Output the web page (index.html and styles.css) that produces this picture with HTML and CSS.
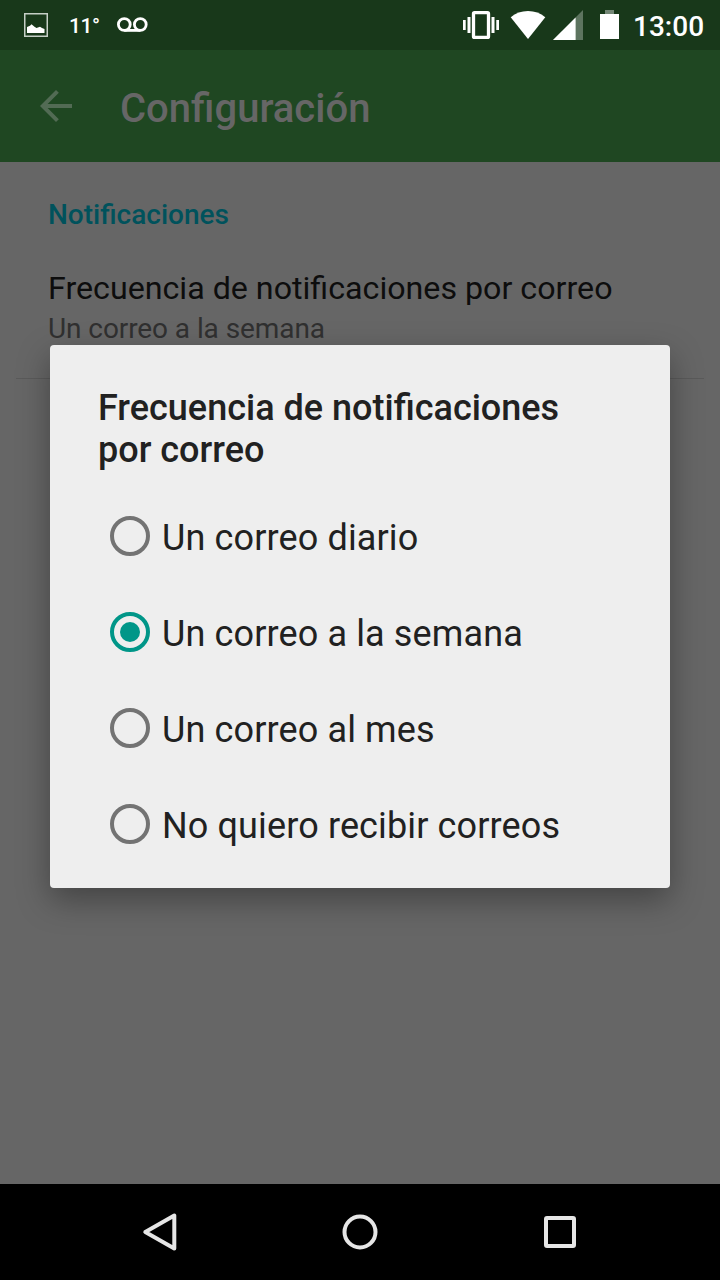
FILE: index.html
```html
<!DOCTYPE html>
<html lang="es">
<head>
<meta charset="utf-8">
<title>Configuración</title>
<link rel="stylesheet" href="styles.css">
</head>
<body>
<div class="screen">
  <div class="status-bar">
    <svg class="status-icons" width="24" height="24" viewBox="0 0 24 24" fill="#fff">
      <rect x="0.75" y="0.75" width="22.5" height="22.5" fill="none" stroke="#c5cfc6" stroke-width="1.5"/>
      <path d="M3 20v-6l3-1.200 1.500-1.500 3 2.500 2 1.200 3.500-1.200 2 1.200 2.500 1v4z"/>
    </svg>
    <span class="temperature">11°</span>
    <svg class="voicemail" width="31" height="16" viewBox="0 0 31 16" fill="none" stroke="#fff" stroke-width="2.800">
      <circle cx="7.300" cy="7.500" r="5.900"/>
      <circle cx="23.300" cy="7.500" r="5.900"/>
      <path d="M7.300 13.400h16"/>
    </svg>
    <svg class="system-icons" width="156" height="30" viewBox="463 10 156 30" fill="#fff">
      <path d="M463 20h2.700v10H463zM467.500 17h3v16h-3zM491.500 17h3v16h-3zM496.300 20h2.700v10h-2.700z"/>
      <rect x="473.500" y="12.700" width="15" height="24.700" rx="1" fill="none" stroke="#fff" stroke-width="3.300"/>
      <path d="M528 39L510.700 17.300Q518 11 528 11T545.300 17.300z"/>
      <path d="M583 10v30h-30z" fill="#5d745f"/>
      <path d="M575.600 17.400V40H553z"/>
      <path d="M605 10h9v4h-9z" fill="#748776"/>
      <path d="M600 14h19v25h-19z"/>
    </svg>
    <span class="clock">13:00</span>
  </div>
  <header class="toolbar">
    <svg class="back" width="48" height="48" viewBox="0 0 24 24" fill="#526b54"><path d="M20 11H7.830l5.590-5.590L12 4l-8 8 8 8 1.410-1.410L7.830 13H20z"/></svg>
    <h1 class="toolbar-title">Configuración</h1>
  </header>
  <main class="content">
    <h2 class="section">Notificaciones</h2>
    <div class="preference">
      <div class="preference-title">Frecuencia de notificaciones por correo</div>
      <div class="preference-value">Un correo a la semana</div>
    </div>
    <div class="dialog">
      <h2 class="dialog-title">Frecuencia de notificaciones por correo</h2>
      <div class="option"><span class="radio"></span><span class="label">Un correo diario</span></div>
      <div class="option"><span class="radio checked"></span><span class="label">Un correo a la semana</span></div>
      <div class="option"><span class="radio"></span><span class="label">Un correo al mes</span></div>
      <div class="option"><span class="radio"></span><span class="label">No quiero recibir correos</span></div>
    </div>
  </main>
  <nav class="nav-bar">
    <svg width="40" height="40" viewBox="0 0 40 40"><path d="M5.300 20L34.300 3.500v33z"/></svg>
    <svg width="40" height="40" viewBox="0 0 40 40"><circle cx="20" cy="20" r="15.500"/></svg>
    <svg width="40" height="40" viewBox="0 0 40 40"><rect x="6" y="6" width="28" height="28" rx="1"/></svg>
  </nav>
</div>
</body>
</html>
```
FILE: styles.css
```css
* { box-sizing: border-box; }
body { margin: 0; font-family: Roboto, sans-serif; }
h1, h2 { margin: 0; font-weight: 500; }
svg { display: block; flex: none; }

.screen {
  width: 720px;
  height: 1280px;
  display: flex;
  flex-direction: column;
  overflow: hidden;
  background: #666;
}

.status-bar {
  height: 50px;
  flex: none;
  display: flex;
  align-items: center;
  padding: 0 16px 0 24px;
  background: #18381a;
  color: #fff;
}
.temperature {
  width: 47px;
  margin-left: 21px;
  font-size: 21px;
  line-height: 24px;
  font-weight: 500;
  letter-spacing: -.4px;
  padding-top: 1px;
}
.voicemail { margin-left: 1px; }
.system-icons { margin-left: auto; }
.clock {
  width: 71px;
  margin-left: 14px;
  font-size: 28px;
  line-height: 34px;
  font-weight: 500;
  padding-top: 3px;
  white-space: nowrap;
}

.toolbar {
  height: 112px;
  flex: none;
  display: flex;
  align-items: center;
  padding-left: 32px;
  background: #1f4722;
}
.toolbar-title {
  margin-left: 40px;
  padding-top: 5px;
  font-size: 40px;
  line-height: 47px;
  color: #666;
}

.content {
  position: relative;
  flex: 1;
  padding: 36px 16px 0;
}
.section {
  padding-left: 32px;
  font-size: 28px;
  line-height: 33px;
  color: #00525c;
}
.preference {
  height: 148px;
  padding: 38px 0 0 32px;
  border-bottom: 1px solid #5a5a5a;
}
.preference-title {
  font-size: 32.200px;
  line-height: 38px;
  color: #0d0d0d;
}
.preference-value {
  margin-top: 5px;
  font-size: 28px;
  line-height: 33px;
  letter-spacing: -.08px;
  color: #303030;
}

.dialog {
  position: absolute;
  left: 50px;
  top: 183px;
  width: 620px;
  height: 543px;
  padding: 42px 48px 0;
  border-radius: 4px;
  background: #eee;
  box-shadow: 0 12px 32px rgba(0, 0, 0, .34);
}
.dialog-title {
  height: 101px;
  padding: 1px 48px 0 0;
  font-size: 36px;
  line-height: 41.500px;
  color: #212121;
}
.option {
  height: 96px;
  display: flex;
  align-items: center;
  padding-left: 12px;
}
.radio {
  width: 40px;
  height: 40px;
  display: grid;
  place-items: center;
  border: 4px solid #737373;
  border-radius: 50%;
}
.checked { border-color: #009688; }
.checked::after {
  content: "";
  width: 20px;
  height: 20px;
  border-radius: 50%;
  background: #009688;
}
.label {
  margin-left: 12px;
  padding-top: 3px;
  font-size: 36px;
  line-height: 42px;
  letter-spacing: .13px;
  color: #212121;
}

.nav-bar {
  height: 96px;
  flex: none;
  display: flex;
  align-items: center;
  justify-content: center;
  gap: 160px;
  background: #000;
  fill: none;
  stroke: #e6e6e6;
  stroke-width: 4;
  stroke-linejoin: round;
}
```
